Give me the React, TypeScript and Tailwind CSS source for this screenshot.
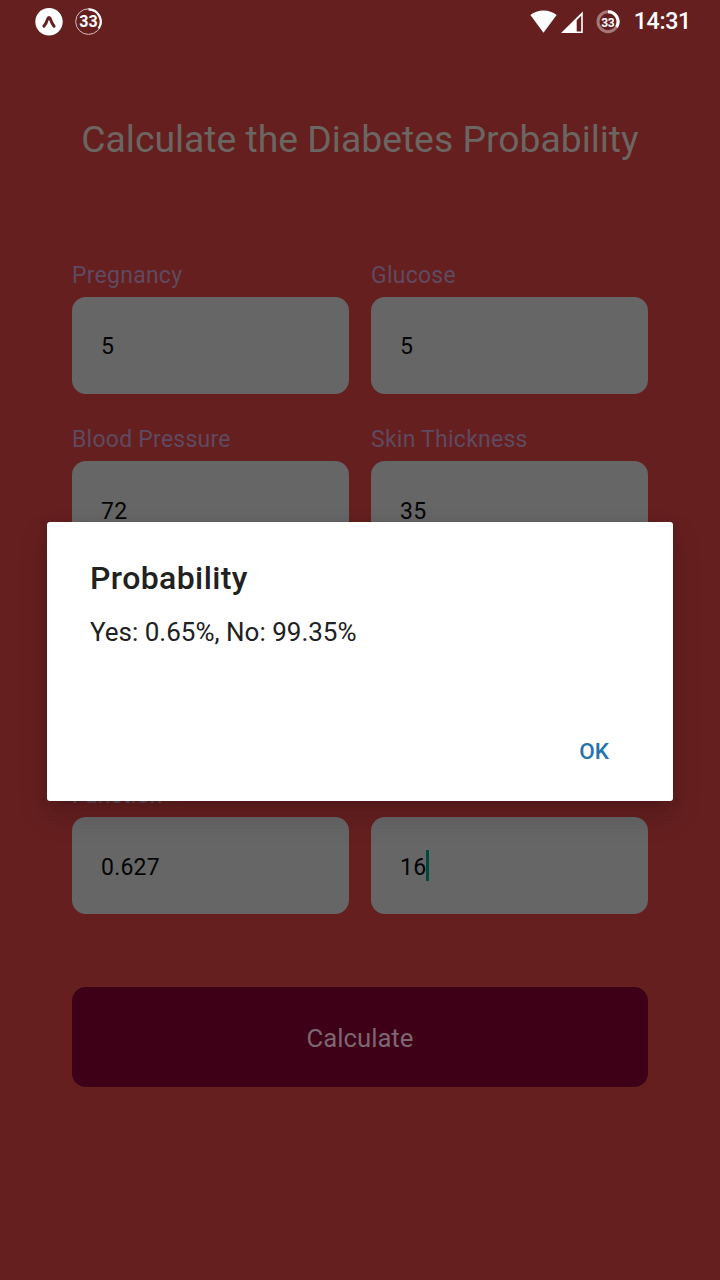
type FieldProps = { label: string; value: string; focused?: boolean };

function Field({ label, value, focused }: FieldProps) {
  return (
    <div className="flex w-[277px] flex-col">
      <div className="h-[27px] whitespace-nowrap pt-[0.5px] text-[23px] leading-[27px] tracking-[0.25px] text-[#5f4a60]">{label}</div>
      <div className="mt-[8.5px] flex h-[97px] items-center rounded-[14px] bg-[#666666] pl-[29px] text-[23px] tracking-[0.2px] text-[#050505]">
        <span className="pt-[5px]">{value}</span>
        {focused && <span className="h-[31px] w-[3px] bg-[#00493c]" />}
      </div>
    </div>
  );
}

function StatusBar() {
  return (
    <header className="flex h-[44px] items-center justify-between pl-[35px] pr-[29px] text-white">
      <div className="flex items-center gap-[12px]">
        <svg width="28" height="28" viewBox="0 0 28 28">
          <circle cx="14" cy="13.8" r="13.7" fill="#fff" />
          <path d="M8.9 18.2 C11 16 12 13.2 12.9 10.4 Q14 8.4 15.1 10.4 C16 13.2 17 16 19.1 18.2" fill="none" stroke="#651f1f" strokeWidth="3" strokeLinecap="round" />
        </svg>
        <div className="relative flex h-[28px] w-[28px] items-center justify-center">
          <svg className="absolute inset-0" width="28" height="28" viewBox="0 0 28 28">
            <circle cx="13.5" cy="13.6" r="12.8" fill="none" stroke="#d9bcbc" strokeWidth="1" />
            <path d="M13.5 1.4 A12.2 12.2 0 0 1 23.6 20.4" fill="none" stroke="#fff" strokeWidth="2.2" />
          </svg>
          <span className="mr-[1px] text-[16px] font-bold leading-none">33</span>
        </div>
      </div>
      <div className="flex items-center">
        <svg width="27" height="24" viewBox="0 0 27 24">
          <path d="M13.5 22.8 L0.4 5 Q6 0.4 13.5 0.4 Q21 0.4 26.6 5 Z" fill="#fff" />
        </svg>
        <svg className="ml-[4px]" width="23" height="24" viewBox="0 0 23 24">
          <path d="M0 23 L21.8 1.5 V23 Z M15.7 10.2 V21.4 H20.2 V5.7 Z" fill="#fff" fillRule="evenodd" />
        </svg>
        <div className="relative ml-[12px] flex h-[24px] w-[24px] items-center justify-center">
          <svg className="absolute inset-0" width="24" height="24" viewBox="0 0 24 24">
            <circle cx="12" cy="11.7" r="10" fill="none" stroke="#a47878" strokeWidth="3" />
            <path d="M12 1.7 A10 10 0 0 1 20.5 17" fill="none" stroke="#fff" strokeWidth="3" />
          </svg>
          <span className="pt-[1px] text-[12px] font-bold leading-none tracking-[-0.5px]">33</span>
        </div>
        <span className="ml-[14px] text-[23.2px] font-medium leading-none tracking-[-0.3px]">14:31</span>
      </div>
    </header>
  );
}

function ProbabilityDialog() {
  return (
    <div className="absolute inset-0 flex items-start justify-center pt-[522px]">
      <div role="dialog" className="flex h-[279px] w-[626px] flex-col rounded-[3px] bg-white px-[43px] shadow-[0_14px_30px_rgba(0,0,0,0.16),0_2px_10px_rgba(0,0,0,0.12)]">
        <h2 className="mt-[37px] text-[32px] font-medium leading-[38px] tracking-[0.4px] text-[#212121]">Probability</h2>
        <p className="mt-[20px] text-[26px] leading-[30px] text-[#212121]">Yes: 0.65%, No: 99.35%</p>
        <button className="mr-[21px] mt-[91px] self-end text-[22.5px] font-medium leading-[26px] text-[#2474ac]">OK</button>
      </div>
    </div>
  );
}

export default function App() {
  return (
    <div className="relative h-[1280px] w-[720px] overflow-hidden bg-[#651f1f] font-['Roboto',sans-serif]">
      <StatusBar />
      <main className="px-[72px]">
        <h1 className="mt-[73px] whitespace-nowrap text-center text-[37.3px] leading-[44px] text-[#6b6662]">Calculate the Diabetes Probability</h1>
        <div className="mt-[100px] grid grid-cols-2 gap-x-[22px] gap-y-[32px]">
          <Field label="Pregnancy" value="5" />
          <Field label="Glucose" value="5" />
          <Field label="Blood Pressure" value="72" />
          <Field label="Skin Thickness" value="35" />
          <Field label="" value="" />
          <Field label="" value="" />
        </div>
        <div className="mt-[59px] grid grid-cols-2 gap-x-[22px]">
          <Field label="Function" value="0.627" />
          <Field label="" value="16" focused />
        </div>
        <button className="mt-[73px] flex h-[100px] w-full items-center justify-center rounded-[14px] bg-[#3d0016] pt-[3px] text-[25.7px] text-[#7d6672]">Calculate</button>
      </main>
      <ProbabilityDialog />
    </div>
  );
}
